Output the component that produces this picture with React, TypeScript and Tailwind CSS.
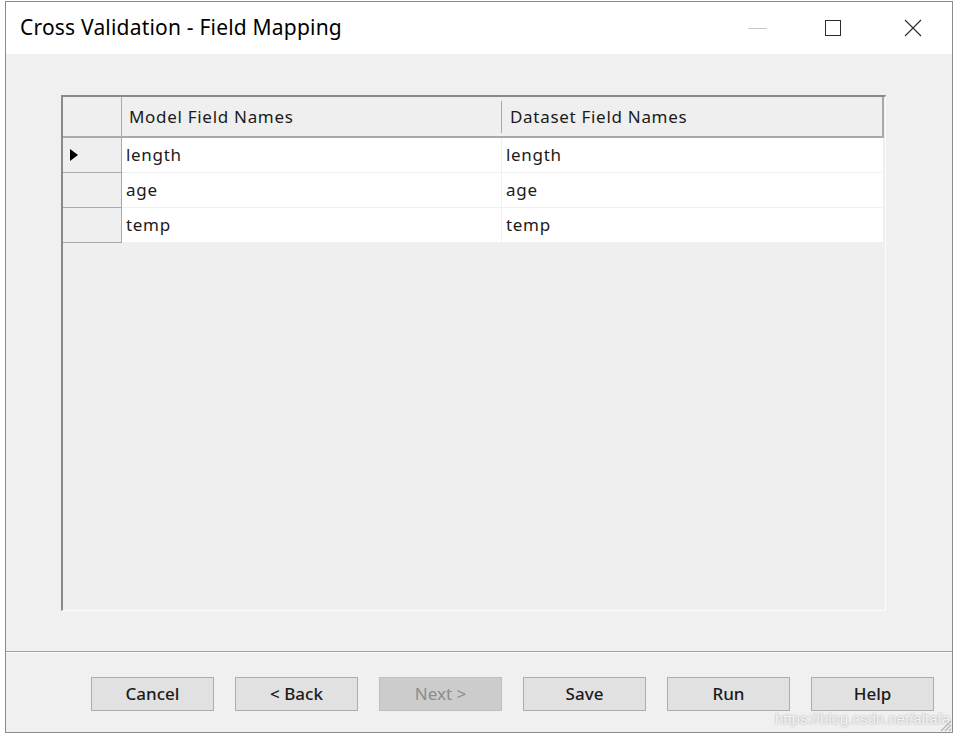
const rows = ['length', 'age', 'temp'];

const buttons = [
  { label: 'Cancel', disabled: false },
  { label: '< Back', disabled: false },
  { label: 'Next >', disabled: true },
  { label: 'Save', disabled: false },
  { label: 'Run', disabled: false },
  { label: 'Help', disabled: false },
];

export default function App() {
  return (
    <div className="w-[961px] h-[739px] bg-white pt-[1px] pl-[5px] font-['Noto_Sans','Open_Sans',sans-serif] text-[#1b1b1b]">
      <div className="w-[948px] h-[732px] border border-[#8c8c8c] flex flex-col">
        {/* Title bar */}
        <div className="h-[52px] bg-white flex items-center shrink-0">
          <div className="pl-[14px] text-[21px] text-black tracking-[0.2px]">Cross Validation - Field Mapping</div>
          <div className="ml-auto flex items-center h-full">
            <div className="w-[78px] h-full flex items-center justify-center">
              <div className="w-[19px] h-px bg-[#c6c6c6]" />
            </div>
            <div className="w-[78px] h-full flex items-center justify-center pr-[4px]">
              <div className="w-[16px] h-[16px] border border-[#2b2b2b]" />
            </div>
            <div className="w-[78px] h-full flex items-center justify-center">
              <svg width="18" height="18" viewBox="0 0 18 18">
                <path d="M1 1 L17 17 M17 1 L1 17" stroke="#2b2b2b" strokeWidth="1.1" />
              </svg>
            </div>
          </div>
        </div>

        {/* Body */}
        <div className="flex-1 bg-[#f0f0f0] flex flex-col">
          <div className="pt-[41px] pl-[55px]">
            <div className="w-[825px] h-[516px] border-l-2 border-t-2 border-[#8a8a8a] border-r border-b border-r-[#fbfbfb] border-b-[#fbfbfb] bg-[#efefef]">
              {/* header */}
              <div className="flex h-[41px] border-b-2 border-[#a9a9a9] border-r-2 border-r-[#a9a9a9] mr-[1px] text-[17px] tracking-[0.7px]">
                <div className="w-[59px] border-r border-[#a9a9a9] shrink-0" />
                <div className="w-[380px] flex items-center pl-[7px] relative">
                  Model Field Names
                  <div className="absolute right-0 top-[4px] bottom-[3px] w-px bg-[#a9a9a9]" />
                </div>
                <div className="flex-1 flex items-center pl-[8px]">Dataset Field Names</div>
              </div>
              {/* rows */}
              {rows.map((r, i) => (
                <div key={r} className="flex h-[35px] text-[17px] tracking-[0.7px] mr-[2px]">
                  <div className="w-[59px] shrink-0 border-r border-b border-[#a9a9a9] flex items-center pl-[7px]">
                    {i === 0 && (
                      <svg width="8" height="12" viewBox="0 0 8 12">
                        <path d="M0 0 L8 6 L0 12 Z" fill="#000" />
                      </svg>
                    )}
                  </div>
                  <div className="w-[380px] bg-white border-b border-r border-[#f0f0f0] flex items-center pl-[4px]">{r}</div>
                  <div className="flex-1 bg-white border-b border-[#f0f0f0] flex items-center pl-[4px]">{r}</div>
                </div>
              ))}
            </div>
          </div>

          {/* separator */}
          <div className="mt-[40px] border-t border-[#a0a0a0]" />
          <div className="border-t border-[#fcfcfc]" />

          {/* buttons */}
          <div className="flex gap-[21px] pl-[85px] pt-[24px] relative flex-1">
            {buttons.map((b) => (
              <div
                key={b.label}
                className={
                  b.disabled
                    ? 'w-[123px] h-[34px] border border-[#bfbfbf] bg-[#cccccc] text-[#8d8d8d] flex items-center justify-center text-[17px]'
                    : 'w-[123px] h-[34px] border border-[#adadad] bg-[#e1e1e1] text-[#1b1b1b] flex items-center justify-center text-[17px] font-medium'
                }
              >
                {b.label}
              </div>
            ))}
            <div className="absolute right-[2px] bottom-[2px] text-[15px] text-[#f4f4f4] font-['Liberation_Sans',sans-serif] [text-shadow:0_0_2px_#9a9a9a]">
              https://blog.csdn.net/altafa
            </div>
            <svg className="absolute right-0 bottom-0" width="14" height="14" viewBox="0 0 14 14">
              <path d="M13 3 L3 13 M13 7 L7 13 M13 11 L11 13" stroke="#b5b5b5" strokeWidth="1.2" />
            </svg>
          </div>
        </div>
      </div>
    </div>
  );
}
